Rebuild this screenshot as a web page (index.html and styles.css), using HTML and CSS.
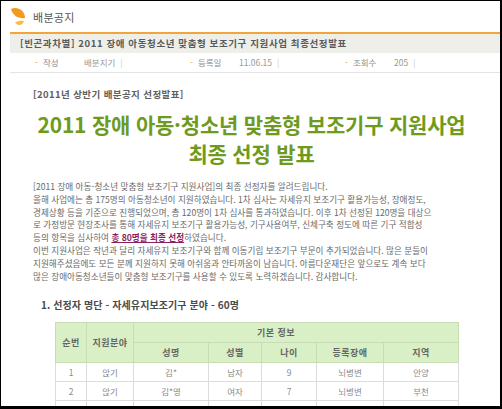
FILE: index.html
```html
<!DOCTYPE html>
<html lang="ko">
<head>
<meta charset="utf-8">
<link rel="stylesheet" href="styles.css">
</head>
<body>
<div class="frame">
  <div class="logo-row">
    <svg class="logo" width="16" height="20" viewBox="0 0 16 20">
      <path d="M1 2 C6 -1 15 2 15 11 C9 12 3 9 1 2 Z" fill="#f29a1d"/>
      <path d="M5 15.5 C8 13.5 12 13.3 14 14 C12.5 18.5 8 19.5 5 15.5 Z" fill="#f6bd45"/>
    </svg>
    <span class="logo-text">배분공지</span>
  </div>
  <div class="titlebar">[빈곤과차별] 2011 장애 아동청소년 맞춤형 보조기구 지원사업 최종선정발표</div>
  <div class="meta">
    <div class="meta-group"><span class="meta-label"><i>-</i>작성</span><span class="meta-value">배분지기</span><span class="sep">|</span></div>
    <div class="meta-group"><span class="meta-label"><i>-</i>등록일</span><span class="meta-value">11.06.15</span><span class="sep">|</span></div>
    <div class="meta-group"><span class="meta-label"><i>-</i>조회수</span><span class="meta-value">205</span><span class="sep">|</span></div>
  </div>
  <div class="content">
    <div class="subtitle">[2011년 상반기 배분공지 선정발표]</div>
    <h1 class="headline">2011 장애 아동·청소년 맞춤형 보조기구 지원사업<br>최종 선정 발표</h1>
    <p class="body-text">[2011 장애 아동-청소년 맞춤형 보조기구 지원사업]의 최종 선정자를 알려드립니다.<br>
올해 사업에는 총 175명의 아동청소년이 지원하였습니다. 1차 심사는 자세유지 보조기구 활용가능성, 장애정도,<br>
경제상황 등을 기준으로 진행되었으며, 총 120명이 1차 심사를 통과하였습니다. 이후 1차 선정된 120명을 대상으<br>
로 가정방문 현장조사를 통해 자세유지 보조기구 활용가능성, 기구사용여부, 신체구축 정도에 따른 기구 적합성<br>
등의 항목을 심사하여 <strong class="hl">총 80명을 최종 선정</strong>하였습니다.<br>
이번 지원사업은 작년과 달리 자세유지 보조기구와 함께 이동기립 보조기구 부문이 추가되었습니다. 많은 분들이<br>
지원해주셨음에도 모든 분께 지원하지 못해 아쉬움과 안타까움이 남습니다. 아름다운재단은 앞으로도 계속 보다<br>
많은 장애아동청소년들이 맞춤형 보조기구를 사용할 수 있도록 노력하겠습니다. 감사합니다.</p>
    <h2 class="section">1. 선정자 명단 - 자세유지보조기구 분야 - 60명</h2>
    <table class="list">
      <colgroup>
        <col class="c1"><col class="c2"><col class="c3"><col class="c4"><col class="c5"><col class="c6"><col class="c7">
      </colgroup>
      <thead>
        <tr><th rowspan="2">순번</th><th rowspan="2">지원분야</th><th colspan="5" class="group">기본 정보</th></tr>
        <tr><th>성명</th><th>성별</th><th>나이</th><th>등록장애</th><th>지역</th></tr>
      </thead>
      <tbody>
        <tr><td>1</td><td>앉기</td><td>김*</td><td>남자</td><td>9</td><td>뇌병변</td><td>안양</td></tr>
        <tr><td>2</td><td>앉기</td><td>김*영</td><td>여자</td><td>7</td><td>뇌병변</td><td>부천</td></tr>
        <tr><td>3</td><td>앉기</td><td>최*진</td><td>남자</td><td>8</td><td>뇌병변</td><td>수원</td></tr>
      </tbody>
    </table>
  </div>
</div>
</body>
</html>
```
FILE: styles.css
```css
html, body {
  margin: 0;
  padding: 0;
  background: #fff;
}
.frame {
  box-sizing: border-box;
  width: 502px;
  height: 409px;
  overflow: hidden;
  border-top: 1px solid #000;
  border-left: 1px solid #000;
  border-right: 2px solid #000;
  border-bottom: 3px solid #000;
  font-family: "Noto Sans CJK KR", "Noto Sans", sans-serif;
  color: #666;
}
.logo-row {
  height: 31px;
  display: flex;
  align-items: center;
  border-bottom: 2px solid #f2a53a;
  margin-left: 9px;
}
.logo {
  display: block;
  margin-top: 1px;
}
.logo-text {
  margin-left: 7px;
  font-size: 11px;
  color: #555;
  letter-spacing: 0.3px;
}
.titlebar {
  margin-left: 9px;
  height: 19px;
  line-height: 19px;
  background: #efefea;
  padding-left: 10px;
  font-size: 9.5px;
  font-weight: bold;
  color: #5a5a5a;
  letter-spacing: 0.6px;
  white-space: nowrap;
}
.meta {
  margin-left: 9px;
  height: 19px;
  border-bottom: 1px solid #e4e4e4;
  display: flex;
  padding-left: 25px;
  font-size: 8.5px;
  color: #8a8a8a;
  line-height: 19px;
}
.meta-group {
  width: 155px;
  display: flex;
  white-space: nowrap;
}
.meta-label {
  width: 49px;
}
.meta-label i {
  font-style: normal;
  color: #f2a53a;
  margin-right: 5px;
}
.meta-value {
  color: #999;
}
.sep {
  margin-left: 5px;
  color: #ccc;
}
.content {
  padding-left: 32px;
  padding-right: 30px;
}
.subtitle {
  margin-top: 14px;
  font-size: 9.5px;
  font-weight: bold;
  color: #606060;
  line-height: 14px;
  letter-spacing: 0.4px;
}
.headline {
  margin: 9px 0 0 0;
  text-align: center;
  font-size: 21px;
  line-height: 29px;
  font-weight: bold;
  color: #6e9b1e;
  letter-spacing: -0.2px;
}
.body-text {
  margin: 12px 0 0 0;
  font-size: 8.6px;
  line-height: 12.8px;
  color: #6a6a6a;
  white-space: nowrap;
}
.hl {
  color: #8e1f63;
  text-decoration: underline;
}
.section {
  margin: 16px 0 0 8px;
  font-size: 10px;
  line-height: 14px;
  font-weight: bold;
  color: #4a4a4a;
  letter-spacing: 0.1px;
}
.list {
  margin: 10px 0 0 22px;
  border-collapse: collapse;
  table-layout: fixed;
  width: 403px;
  font-size: 8.5px;
}
.c1 { width: 31px; }
.c2 { width: 47px; }
.c3 { width: 75px; }
.c4 { width: 53px; }
.c5 { width: 55px; }
.c6 { width: 67px; }
.c7 { width: 75px; }
.list th {
  background: #d9efc5;
  border: 1px solid #c8ddb5;
  height: 19px;
  padding: 0;
  font-weight: bold;
  color: #666;
  font-size: 9px;
  letter-spacing: 0.5px;
}
.list th.group {
  padding-right: 40px;
}
.list td {
  border: 1px solid #dcdcdc;
  height: 18px;
  padding: 0;
  text-align: center;
  color: #8a8a8a;
}
```
